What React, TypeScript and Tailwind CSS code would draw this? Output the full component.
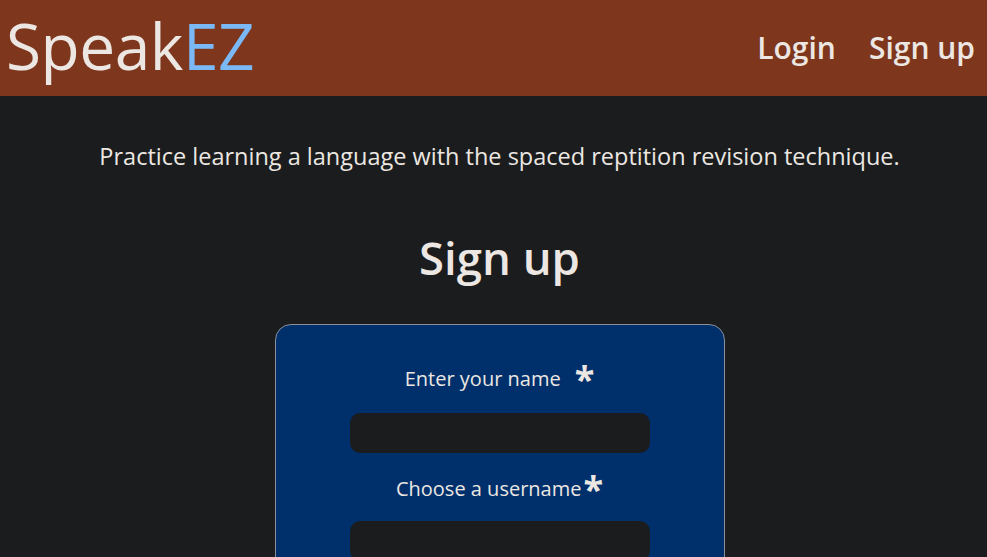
import React from "react";

export default function App() {
  return (
    <div className="min-h-[557px] bg-[#1b1c1e] text-[#ece7e2] font-['Open_Sans',sans-serif]">
      <header className="h-[96px] bg-[#7e361d] flex items-center justify-between pl-[6px] pr-[12px]">
        <div className="text-[64px] leading-none tracking-[-0.5px] pb-[4px]">
          Speak<span className="text-[#7ab9f5]">EZ</span>
        </div>
        <nav className="flex gap-[33px] text-[30px] font-semibold pb-[2px]">
          <a>Login</a>
          <a>Sign up</a>
        </nav>
      </header>
      <main className="flex flex-col items-center pl-[12px]">
        <p className="mt-[45px] text-[23.5px] leading-[30px]">
          Practice learning a language with the spaced reptition revision technique.
        </p>
        <h1 className="mt-[58px] text-[45.5px] font-semibold leading-[56px]">Sign up</h1>
        <div className="mt-[39px] w-[450px] h-[260px] bg-[#00306b] border border-[#8a8f99] rounded-[16px] flex flex-col items-center pt-[38px]">
          <label className="flex items-start text-[20px] leading-[28px]">
            <span className="mt-[2px]">Enter your name</span>
            <span className="ml-[14px] -mt-[2px] text-[36px] leading-[36px] font-bold">*</span>
          </label>
          <div className="mt-[16px] w-[300px] h-[40px] rounded-[10px] bg-[#1b1c1e]" />
          <label className="mt-[20px] flex items-start text-[20px] leading-[28px]">
            <span className="mt-[2px]">Choose a username</span>
            <span className="ml-[2px] -mt-[2px] text-[36px] leading-[36px] font-bold">*</span>
          </label>
          <div className="mt-[14px] w-[300px] h-[40px] rounded-[10px] bg-[#1b1c1e]" />
        </div>
      </main>
    </div>
  );
}
